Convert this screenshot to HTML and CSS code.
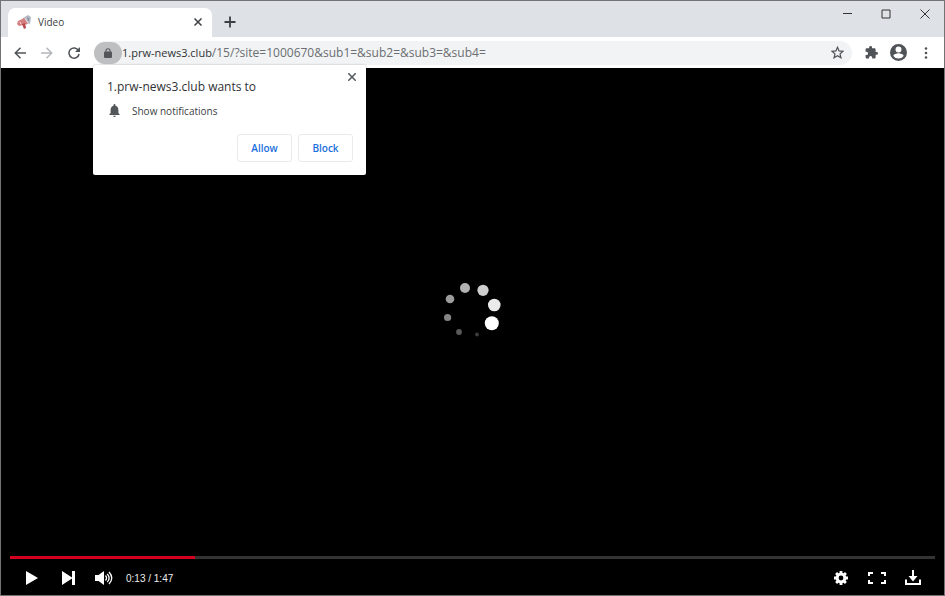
FILE: index.html
```html
<!DOCTYPE html>
<html lang="en">
  <head>
    <meta charset="UTF-8" />
    <meta name="viewport" content="width=device-width, initial-scale=1" />
    <title>Video</title>
    <link rel="stylesheet" href="styles.css">
  </head>
  <body>
    <!-- Tab strip -->
    <header class="tab-strip">
      <div class="tab">
        <svg class="favicon" width="14" height="14" viewBox="0 0 14 14">
          <path d="M6 3 11 0l3 2-1 7-4-1z" fill="#b3b9c4" />
          <path d="M1 6 7 3l4 6-5 1-4 1-2-2z" fill="#d57f80" />
          <path d="m5 9 3-1 1 5-2 1z" fill="#b9474e" />
          <path d="m8 3 3 5M3 7l1 2" stroke="#f5dadd" stroke-width="1" />
          <path d="m10 3 2 1-1 2" fill="none" stroke="#7d8593" />
        </svg>
        <span class="tab-title">Video</span>
        <button class="tab-close" aria-label="Close tab">
          <svg width="8" height="8" viewBox="0 0 8 8"><path d="m.5 .5 7 7M7.500 .5l-7 7" stroke="#3c4043" stroke-width="1.5" /></svg>
        </button>
      </div>
      <button class="new-tab" aria-label="New tab">
        <svg width="12" height="12" viewBox="0 0 12 12"><path d="M6 .5v11M.5 6h11" stroke="#3c4043" stroke-width="1.8" /></svg>
      </button>
      <div class="window-buttons">
        <button aria-label="Minimize">
          <svg width="10" height="10" viewBox="0 0 10 10"><path d="M1 4.500h9" stroke="#333" /></svg>
        </button>
        <button aria-label="Maximize">
          <svg width="10" height="10" viewBox="0 0 10 10"><path d="M1 1h8v8H1z" fill="none" stroke="#333" /></svg>
        </button>
        <button aria-label="Close">
          <svg width="10" height="10" viewBox="0 0 10 10"><path d="m.5 .5 9 9M9.500 .5l-9 9" stroke="#333" /></svg>
        </button>
      </div>
    </header>

    <!-- Toolbar -->
    <nav class="toolbar">
      <button class="tool" aria-label="Back">
        <svg width="12" height="12" viewBox="0 0 12 12"><path d="M12 6H1.500M6.500 .8 1.300 6l5.200 5.200" fill="none" stroke="#505357" stroke-width="1.5" /></svg>
      </button>
      <button class="tool" aria-label="Forward" disabled>
        <svg width="12" height="12" viewBox="0 0 12 12"><path d="M0 6h10.500M5.500 .8 10.700 6l-5.200 5.200" fill="none" stroke="#b5b7ba" stroke-width="1.5" /></svg>
      </button>
      <button class="tool" aria-label="Reload">
        <svg width="12" height="12" viewBox="0 0 12 12">
          <path d="M10.500 3.500A5.100 5.100 0 1 0 11.100 7" fill="none" stroke="#505357" stroke-width="1.5" />
          <path d="M12 0v5H7z" fill="#505357" />
        </svg>
      </button>

      <div class="omnibox">
        <button class="site-info" aria-label="View site information">
          <svg width="8" height="10" viewBox="0 0 8 10">
            <path d="M2 4V2.800a2 2 0 0 1 4 0V4" fill="none" stroke="#54575a" stroke-width="1.1" />
            <rect y="3.600" width="8" height="6.400" rx="1" fill="#54575a" />
          </svg>
        </button>
        <label class="host" for="address">1.prw-news3.club</label>
        <input class="address" id="address" type="text" value="/15/?site=1000670&amp;sub1=&amp;sub2=&amp;sub3=&amp;sub4=" />
        <button class="bookmark" aria-label="Bookmark this tab">
          <svg width="13" height="13" viewBox="0 0 24 24">
            <path d="m12 2.500 2.900 6.600 7.200.7-5.400 4.800 1.600 7.100-6.300-3.800-6.300 3.800 1.600-7.100L1.900 9.800l7.200-.7z" fill="none" stroke="#505357" stroke-width="2.300" />
          </svg>
        </button>

        <section class="permission" role="dialog" aria-labelledby="permission-title">
          <button class="permission-close" aria-label="Dismiss">
            <svg width="8" height="8" viewBox="0 0 8 8"><path d="m.3 .3 7.400 7.400M7.700 .3 .3 7.700" stroke="#54575a" stroke-width="1.500" /></svg>
          </button>
          <h1 class="permission-title" id="permission-title">1.prw-news3.club wants to</h1>
          <p class="permission-item">
            <svg width="11" height="13" viewBox="0 0 16 20">
              <path d="M8 20a2 2 0 0 0 2-2H6a2 2 0 0 0 2 2zm6-6V9c0-3.100-1.600-5.600-4.500-6.300V1.500a1.500 1.500 0 0 0-3 0v1.200C3.600 3.400 2 5.900 2 9v5l-2 2v1h16v-1z" fill="#54575a" />
            </svg>
            Show notifications
          </p>
          <div class="permission-actions">
            <button class="action">Allow</button>
            <button class="action">Block</button>
          </div>
        </section>
      </div>

      <button class="tool" aria-label="Extensions">
        <svg width="13" height="13" viewBox="1 1 22 22">
          <path d="M20.500 11H19V7a2 2 0 0 0-2-2h-4V3.500a2.500 2.500 0 0 0-5 0V5H4a2 2 0 0 0-2 2v3.800h1.500a2.700 2.700 0 0 1 0 5.400H2V20a2 2 0 0 0 2 2h3.800v-1.500a2.700 2.700 0 0 1 5.400 0V22H17a2 2 0 0 0 2-2v-4h1.500a2.500 2.500 0 0 0 0-5z" fill="#505357" />
        </svg>
      </button>
      <button class="tool" aria-label="Profile">
        <svg width="17" height="17" viewBox="2 2 20 20">
          <path d="M12 2a10 10 0 1 0 0 20 10 10 0 0 0 0-20zm0 3a3.500 3.500 0 1 1 0 7 3.500 3.500 0 0 1 0-7zm0 14.200a7.200 7.200 0 0 1-6-3.200c0-2 4-3.100 6-3.100s6 1.100 6 3.100a7.200 7.200 0 0 1-6 3.200z" fill="#505357" />
        </svg>
      </button>
      <button class="tool" aria-label="Menu">
        <svg width="4" height="12" viewBox="0 0 4 12" fill="#505357">
          <circle cx="2" cy="1.500" r="1.300" /><circle cx="2" cy="6" r="1.300" /><circle cx="2" cy="10.500" r="1.300" />
        </svg>
      </button>
    </nav>

    <!-- Video player -->
    <main class="player">
      <div class="stage">
        <svg width="64" height="60" viewBox="441 282 64 60">
          <circle cx="465" cy="288" r="5" fill="#b2b2b2" />
          <circle cx="483" cy="290.300" r="5.600" fill="#cecece" />
          <circle cx="494.300" cy="305" r="6.300" fill="#ebebeb" />
          <circle cx="491.800" cy="323.300" r="7" fill="#fff" />
          <circle cx="477" cy="334.500" r="2" fill="#3c3c3c" />
          <circle cx="459" cy="332" r="2.900" fill="#5a5a5a" />
          <circle cx="447.600" cy="317.500" r="3.600" fill="#858585" />
          <circle cx="450" cy="299" r="4.300" fill="#9c9c9c" />
        </svg>
      </div>
      <input class="seek" type="range" min="0" max="100" value="20" aria-label="Seek" />
      <div class="controls">
        <button aria-label="Play">
          <svg width="12" height="14" viewBox="0 0 12 14"><path d="M0 0l12 7-12 7z" fill="#fff" /></svg>
        </button>
        <button aria-label="Next">
          <svg width="13" height="14" viewBox="0 0 13 14"><path d="M0 0l10 6.500V0h3v14h-3V7.500L0 14z" fill="#fff" /></svg>
        </button>
        <button aria-label="Mute">
          <svg width="18" height="14" viewBox="0 0 18 14">
            <path d="M0 4h3.500L9 0v14l-5.500-4H0z" fill="#fff" />
            <path d="M10.500 4.500q2 2.500 0 5M12.300 2.800q3.600 4.200 0 8.400M14 1q5.500 6 0 12" fill="none" stroke="#fff" stroke-width="1.300" />
          </svg>
        </button>
        <span class="time">0:13 / 1:47</span>
        <button aria-label="Settings">
          <svg width="14" height="14" viewBox="-7 -7 14 14">
            <circle r="3.900" fill="none" stroke="#fff" stroke-width="3" />
            <path d="M0-7v3M0 4v3M-7 0h3M4 0h3M-4.900-4.900l2 2M2.900 2.900l2 2M-4.900 4.900l2-2M2.900-2.900l2-2" stroke="#fff" stroke-width="2.800" />
          </svg>
        </button>
        <button aria-label="Full screen">
          <svg width="18" height="12" viewBox="0 0 18 12"><path d="M1 4V1h4M13 1h4v3M17 8v3h-4M5 11H1V8" fill="none" stroke="#fff" stroke-width="2" /></svg>
        </button>
        <button aria-label="Download">
          <svg width="16" height="16" viewBox="0 0 16 16">
            <path d="M1 9.500V14h14V9.500" fill="none" stroke="#fff" stroke-width="2" />
            <path d="M7 0h2v6h3.500L8 11.500 3.500 6H7z" fill="#fff" />
          </svg>
        </button>
      </div>
    </main>
  </body>
</html>
```
FILE: styles.css
```css
* {
  box-sizing: border-box;
}
body {
  display: flex;
  flex-direction: column;
  min-height: 100vh;
  margin: 0;
  border: 1px solid #737377;
  background: #000;
  color: #3c4043;
  font-family: "Open Sans", "Noto Sans", sans-serif;
  font-size: 12px;
}
button {
  display: flex;
  align-items: center;
  justify-content: center;
  padding: 0;
  border: 0;
  background: none;
  font-family: inherit;
}
svg {
  display: block;
  flex: none;
}

/* Tab strip */
.tab-strip {
  display: flex;
  height: 36px;
  padding-left: 7px;
  background: #dee1e6;
}
.tab {
  display: flex;
  align-items: center;
  width: 204px;
  height: 29px;
  margin-top: 7px;
  padding: 0 8px 1px 9px;
  border-radius: 7px 7px 0 0;
  background: #fff;
}
.tab-title {
  flex: 1;
  margin-left: 7px;
  font-size: 10px;
}
.tab-close {
  width: 12px;
  height: 12px;
}
.new-tab {
  width: 24px;
  height: 24px;
  margin: 9px 0 0 6px;
}
.window-buttons {
  display: flex;
  margin-left: auto;
}
.window-buttons button {
  width: 39px;
  height: 26px;
}

/* Toolbar */
.toolbar {
  display: flex;
  align-items: center;
  height: 31px;
  padding: 0 5px;
  background: #fff;
}
.tool {
  width: 27px;
  height: 27px;
}
.omnibox {
  position: relative;
  display: flex;
  flex: 1;
  align-items: center;
  min-width: 0;
  height: 24px;
  margin: 0 6px 0 7px;
  padding-right: 1px;
  border-radius: 12px;
  background: #f1f3f4;
}
.site-info {
  width: 28px;
  height: 22px;
  border-radius: 11px;
  background: #bdbfc1;
}
.host {
  color: #303235;
  font-size: 11px;
}
.address {
  flex: 1;
  min-width: 0;
  padding: 0;
  border: 0;
  background: none;
  color: #6b6e72;
  font-family: inherit;
  font-size: 12px;
}
.bookmark {
  width: 28px;
  height: 24px;
}

/* Permission prompt */
.permission {
  position: absolute;
  top: 24px;
  left: -1px;
  width: 273px;
  padding: 13px 13px 13px 14px;
  border-radius: 2px;
  background: #fff;
  box-shadow: 0 0 2px rgba(0, 0, 0, 0.3);
}
.permission-close {
  position: absolute;
  top: 4px;
  right: 6px;
  width: 16px;
  height: 16px;
}
.permission-title {
  margin: 0;
  color: #303235;
  font-size: 12px;
  font-weight: 400;
  line-height: 18px;
}
.permission-item {
  display: flex;
  align-items: center;
  gap: 12px;
  margin: 6px 0 14px;
  padding-left: 2px;
  font-size: 10px;
  line-height: 18px;
}
.permission-actions {
  display: flex;
  justify-content: flex-end;
  gap: 6px;
}
.action {
  width: 55px;
  height: 28px;
  border: 1px solid #e8eaed;
  border-radius: 3px;
  color: #1a6fdc;
  font-size: 10px;
  font-weight: 600;
}

/* Player */
.player {
  display: flex;
  flex: 1;
  flex-direction: column;
  background: #000;
}
.stage {
  display: flex;
  flex: 1;
  align-items: center;
  justify-content: center;
}
.seek {
  height: 3px;
  margin: 0 9px;
  appearance: none;
  background: linear-gradient(to right, #d4001f 20%, #333 20%);
}
.seek::-webkit-slider-thumb {
  width: 1px;
  height: 3px;
  appearance: none;
  background: transparent;
}
.controls {
  display: flex;
  align-items: center;
  height: 36px;
  padding: 2px 13px 0;
}
.controls button {
  width: 36px;
  height: 32px;
}
.time {
  flex: 1;
  margin-left: 4px;
  color: #eee;
  font-family: "Liberation Sans", Arial, sans-serif;
  font-size: 10px;
}
```
